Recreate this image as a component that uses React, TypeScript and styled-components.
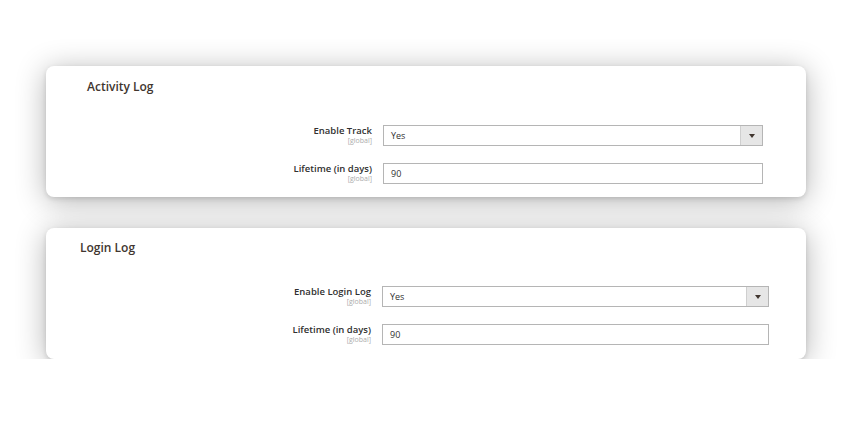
import React from "react";
import styled, { createGlobalStyle } from "styled-components";

const GlobalStyle = createGlobalStyle`
    html, body {
        margin: 0;
        padding: 0;
        background: #ffffff;
        font-family: "Open Sans", "Liberation Sans", sans-serif;
    }
`;

type Field = {
    label: string;
    scope: string;
    value: string;
    select?: boolean;
};

type Section = {
    title: string;
    titleIndent: number;
    topPad: number;
    inputWidth: number;
    rightPad: number;
    fields: Field[];
};

const sections: Section[] = [
    {
        title: "Activity Log",
        titleIndent: 41,
        topPad: 13,
        inputWidth: 380,
        rightPad: 43,
        fields: [
            { label: "Enable Track", scope: "[global]", value: "Yes", select: true },
            { label: "Lifetime (in days)", scope: "[global]", value: "90" },
        ],
    },
    {
        title: "Login Log",
        titleIndent: 34,
        topPad: 12,
        inputWidth: 387,
        rightPad: 37,
        fields: [
            { label: "Enable Login Log", scope: "[global]", value: "Yes", select: true },
            { label: "Lifetime (in days)", scope: "[global]", value: "90" },
        ],
    },
];

export default function App() {
    return (
        <>
            <GlobalStyle />
            <StyledPage>
                {sections.map((section) => (
                    <StyledCard key={section.title} $topPad={section.topPad}>
                        <StyledTitle $indent={section.titleIndent}>{section.title}</StyledTitle>
                        <StyledFields>
                            {section.fields.map((field) => (
                                <StyledRow
                                    key={field.label}
                                    $inputWidth={section.inputWidth}
                                    $rightPad={section.rightPad}
                                >
                                    <StyledLabel>
                                        <StyledLabelText>{field.label}</StyledLabelText>
                                        <StyledScope>{field.scope}</StyledScope>
                                    </StyledLabel>
                                    <StyledControl>
                                        <StyledValue>{field.value}</StyledValue>
                                        {field.select && (
                                            <StyledArrowBox>
                                                <StyledArrow />
                                            </StyledArrowBox>
                                        )}
                                    </StyledControl>
                                </StyledRow>
                            ))}
                        </StyledFields>
                    </StyledCard>
                ))}
            </StyledPage>
        </>
    );
}

// ---------------------------------------------- Style ---------------------------------------------- //

const StyledPage = styled.div`
    display: flex;
    flex-direction: column;
    gap: 31px;
    width: 760px;
    padding: 66px 0 0 46px;
`;

const StyledCard = styled.section<{ $topPad: number }>`
    display: flex;
    flex-direction: column;
    height: 131px;
    box-sizing: border-box;
    padding: ${({ $topPad }) => $topPad}px 0 13px 0;
    background: #ffffff;
    border-radius: 8px;
    box-shadow: 0 2px 5px rgba(0, 0, 0, 0.12), 0 4px 30px rgba(0, 0, 0, 0.3);
`;

const StyledTitle = styled.h2<{ $indent: number }>`
    margin: 0 0 30px ${({ $indent }) => $indent}px;
    font-size: 12px;
    line-height: 16px;
    font-weight: 600;
    color: #41362f;
`;

const StyledFields = styled.div`
    display: flex;
    flex-direction: column;
    gap: 17px;
`;

const StyledRow = styled.div<{ $inputWidth: number; $rightPad: number }>`
    display: grid;
    grid-template-columns: 1fr ${({ $inputWidth }) => $inputWidth}px;
    column-gap: 11px;
    padding-right: ${({ $rightPad }) => $rightPad}px;
`;

const StyledLabel = styled.div`
    display: flex;
    flex-direction: column;
    align-items: flex-end;
`;

const StyledLabelText = styled.span`
    font-size: 9.5px;
    line-height: 12px;
    font-weight: 600;
    color: #303030;
`;

const StyledScope = styled.span`
    font-size: 7px;
    line-height: 8px;
    color: #ababab;
`;

const StyledControl = styled.div`
    display: flex;
    align-items: stretch;
    height: 21px;
    box-sizing: border-box;
    border: 1px solid #b5b5b5;
    background: #ffffff;
`;

const StyledValue = styled.span`
    flex: 1;
    display: flex;
    align-items: center;
    padding-left: 7px;
    font-size: 9px;
    color: #303030;
`;

const StyledArrowBox = styled.span`
    display: flex;
    align-items: center;
    justify-content: center;
    width: 21px;
    border-left: 1px solid #cfcfcf;
    background: #e6e6e6;
`;

const StyledArrow = styled.span`
    width: 0;
    height: 0;
    border-left: 3px solid transparent;
    border-right: 3px solid transparent;
    border-top: 4px solid #41362f;
`;
